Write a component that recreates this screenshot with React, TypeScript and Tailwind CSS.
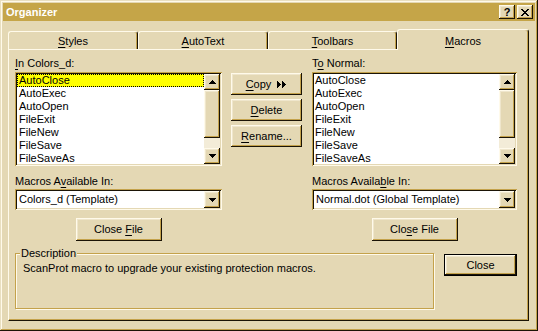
import React from "react";

const bevelOut =
  "shadow-[inset_-1px_-1px_#1b1406,inset_1px_1px_#fffaea,inset_-2px_-2px_#c4a24b,inset_2px_2px_#efe6cc]";
const sunken =
  "shadow-[inset_1px_1px_#c4a24b,inset_-1px_-1px_#fffaea,inset_2px_2px_#1b1406,inset_-2px_-2px_#e4d8b4]";

function U({ children }: { children: React.ReactNode }) {
  return <span className="underline underline-offset-[2px]">{children}</span>;
}

function Btn({ children, className = "" }: { children: React.ReactNode; className?: string }) {
  return (
    <div className={"flex items-center justify-center bg-[#e4d8b4] " + bevelOut + " " + className}>
      {children}
    </div>
  );
}

function Tri({ dir }: { dir: "up" | "down" }) {
  return (
    <svg width="7" height="4" viewBox="0 0 7 4" shapeRendering="crispEdges">
      {dir === "up" ? (
        <path d="M3 0h1v1h-1zM2 1h3v1h-3zM1 2h5v1h-5zM0 3h7v1h-7z" fill="#000" />
      ) : (
        <path d="M0 0h7v1h-7zM1 1h5v1h-5zM2 2h3v1h-3zM3 3h1v1h-1z" fill="#000" />
      )}
    </svg>
  );
}

function ArrowBtn({ dir, h = "h-[16px]" }: { dir: "up" | "down"; h?: string }) {
  return (
    <div className={"w-[16px] shrink-0 flex items-center justify-center bg-[#e4d8b4] " + h + " " + bevelOut}>
      <Tri dir={dir} />
    </div>
  );
}

const items = ["AutoClose", "AutoExec", "AutoOpen", "FileExit", "FileNew", "FileSave", "FileSaveAs"];

function ListBox({ sel, pad }: { sel: number; pad: string }) {
  return (
    <div className={"h-[94px] bg-white flex p-[2px] " + sunken}>
      <div className="flex-1 overflow-hidden flex flex-col">
        {items.map((it, i) => (
          <div
            key={it}
            className={
              "h-[13px] shrink-0 leading-[13px] whitespace-nowrap " +
              pad +
              (i === sel ? " bg-[#ffff00] outline-1 outline-dotted outline-black -outline-offset-1" : "")
            }
          >
            {it}
          </div>
        ))}
      </div>
      <div className="w-[16px] flex flex-col bg-[#f3ecd8]">
        <ArrowBtn dir="up" />
        <div className={"h-[48px] bg-[#e4d8b4] " + bevelOut} />
        <div className="flex-1" />
        <ArrowBtn dir="down" />
      </div>
    </div>
  );
}

function Combo({ text }: { text: string }) {
  return (
    <div className={"h-[21px] bg-white flex p-[2px] " + sunken}>
      <div className="flex-1 pl-[2px] leading-[17px] whitespace-nowrap overflow-hidden">{text}</div>
      <ArrowBtn dir="down" h="h-[17px]" />
    </div>
  );
}

function Tab({ children, w, selected = false }: { children: React.ReactNode; w: string; selected?: boolean }) {
  return (
    <div
      className={
        "shrink-0 flex justify-center border-t border-l border-r border-t-[#fffaea] border-l-[#fffaea] border-r-[#1b1406] rounded-t-[3px] bg-[#e4d8b4] shadow-[inset_-1px_0_#c4a24b] " +
        w +
        (selected ? " h-[21px] pt-[5px] relative z-10" : " h-[19px] mt-[2px] pt-[3px]")
      }
    >
      <span className="leading-[13px]">{children}</span>
    </div>
  );
}

export default function App() {
  return (
    <div
      className={
        "w-[538px] h-[331px] bg-[#e4d8b4] p-[3px] flex flex-col text-[11px] leading-[13px] text-black font-['Liberation_Sans',Arial,sans-serif] shadow-[inset_-1px_-1px_#1b1406,inset_1px_1px_#e9dfc0,inset_-2px_-2px_#c4a24b,inset_2px_2px_#fffaea]"
      }
    >
      {/* Title bar */}
      <div className="h-[18px] bg-[#c5a548] flex items-center pl-[3px] pr-[2px]">
        <span className="font-bold text-white flex-1">Organizer</span>
        <div className={"w-[16px] h-[14px] flex items-center justify-center bg-[#e4d8b4] font-bold " + bevelOut}>
          <span className="leading-[11px] mt-[1px]">?</span>
        </div>
        <div className={"w-[16px] h-[14px] ml-[2px] flex items-center justify-center bg-[#e4d8b4] " + bevelOut}>
          <svg width="8" height="7" viewBox="0 0 8 7" shapeRendering="crispEdges">
            <path
              d="M0 0h2v1h-2zM6 0h2v1h-2zM1 1h2v1h-2zM5 1h2v1h-2zM2 2h4v1h-4zM3 3h2v1h-2zM2 4h4v1h-4zM1 5h2v1h-2zM5 5h2v1h-2zM0 6h2v1h-2zM6 6h2v1h-2z"
              fill="#000"
            />
          </svg>
        </div>
      </div>

      {/* Tabs */}
      <div className="ml-[5px] mt-[8px] flex flex-col w-[521px]">
        <div className="flex h-[20px] items-start">
          <Tab w="w-[130px]">
            <U>S</U>tyles
          </Tab>
          <Tab w="w-[130px]">
            <U>A</U>utoText
          </Tab>
          <Tab w="w-[129px]">
            <U>T</U>oolbars
          </Tab>
          <Tab w="w-[132px]" selected>
            <U>M</U>acros
          </Tab>
        </div>

        {/* Panel */}
        <div className="h-[272px] border-t border-l border-r border-b border-t-[#fffaea] border-l-[#fffaea] border-r-[#1b1406] border-b-[#1b1406] shadow-[inset_-1px_-1px_#c4a24b] pl-[6px] pt-[7px] flex flex-col">
          {/* Row 1 */}
          <div className="flex items-start">
            <div className="w-[207px] flex flex-col">
              <div className="h-[15px]">
                <U>I</U>n Colors_d:
              </div>
              <ListBox sel={0} pad="pl-[2px]" />
            </div>
            <div className="ml-[9px] w-[71px] pt-[16px] flex flex-col gap-[4px]">
              <Btn className="h-[22px]">
                <span>
                  <U>C</U>opy
                </span>
                <svg className="ml-[6px]" width="10" height="7" viewBox="0 0 10 7" shapeRendering="crispEdges">
                  <path
                    d="M0 0h1v7h-1zM1 1h1v5h-1zM2 2h1v3h-1zM3 3h1v1h-1zM5 0h1v7h-1zM6 1h1v5h-1zM7 2h1v3h-1zM8 3h1v1h-1z"
                    fill="#000"
                  />
                </svg>
              </Btn>
              <Btn className="h-[22px]">
                <span>
                  <U>D</U>elete
                </span>
              </Btn>
              <Btn className="h-[22px]">
                <span>
                  <U>R</U>ename...
                </span>
              </Btn>
            </div>
            <div className="ml-[10px] w-[205px] flex flex-col">
              <div className="h-[15px]">
                T<U>o</U> Normal:
              </div>
              <ListBox sel={-1} pad="pl-[1px]" />
            </div>
          </div>

          {/* Row 2 */}
          <div className="flex items-start mt-[9px]">
            <div className="w-[207px] flex flex-col">
              <div className="h-[14px]">
                Macros A<U>v</U>ailable In:
              </div>
              <Combo text="Colors_d (Template)" />
              <div className="flex justify-center mt-[8px]">
                <Btn className="w-[86px] h-[23px]">
                  <span>
                    Close <U>F</U>ile
                  </span>
                </Btn>
              </div>
            </div>
            <div className="ml-[90px] w-[205px] flex flex-col">
              <div className="h-[14px]">
                Macros Availa<U>b</U>le In:
              </div>
              <Combo text="Normal.dot (Global Template)" />
              <div className="flex justify-center mt-[8px]">
                <Btn className="w-[86px] h-[23px]">
                  <span>
                    Clo<U>s</U>e File
                  </span>
                </Btn>
              </div>
            </div>
          </div>

          {/* Row 3 */}
          <div className="flex items-start mt-[6px]">
            <fieldset className="w-[419px] h-[62px] border border-[#c4a24b] shadow-[inset_1px_1px_#fffaea,1px_1px_#fffaea] px-[4px]">
              <legend className="px-[1px] bg-[#e4d8b4] leading-[13px]">Description</legend>
              <div className="pl-[3px] mt-[2px]">ScanProt macro to upgrade your existing protection macros.</div>
            </fieldset>
            <div className="ml-[10px] mt-[7px] w-[73px] h-[22px] border border-black">
              <Btn className="w-full h-full">
                <span>Close</span>
              </Btn>
            </div>
          </div>
        </div>
      </div>
    </div>
  );
}
